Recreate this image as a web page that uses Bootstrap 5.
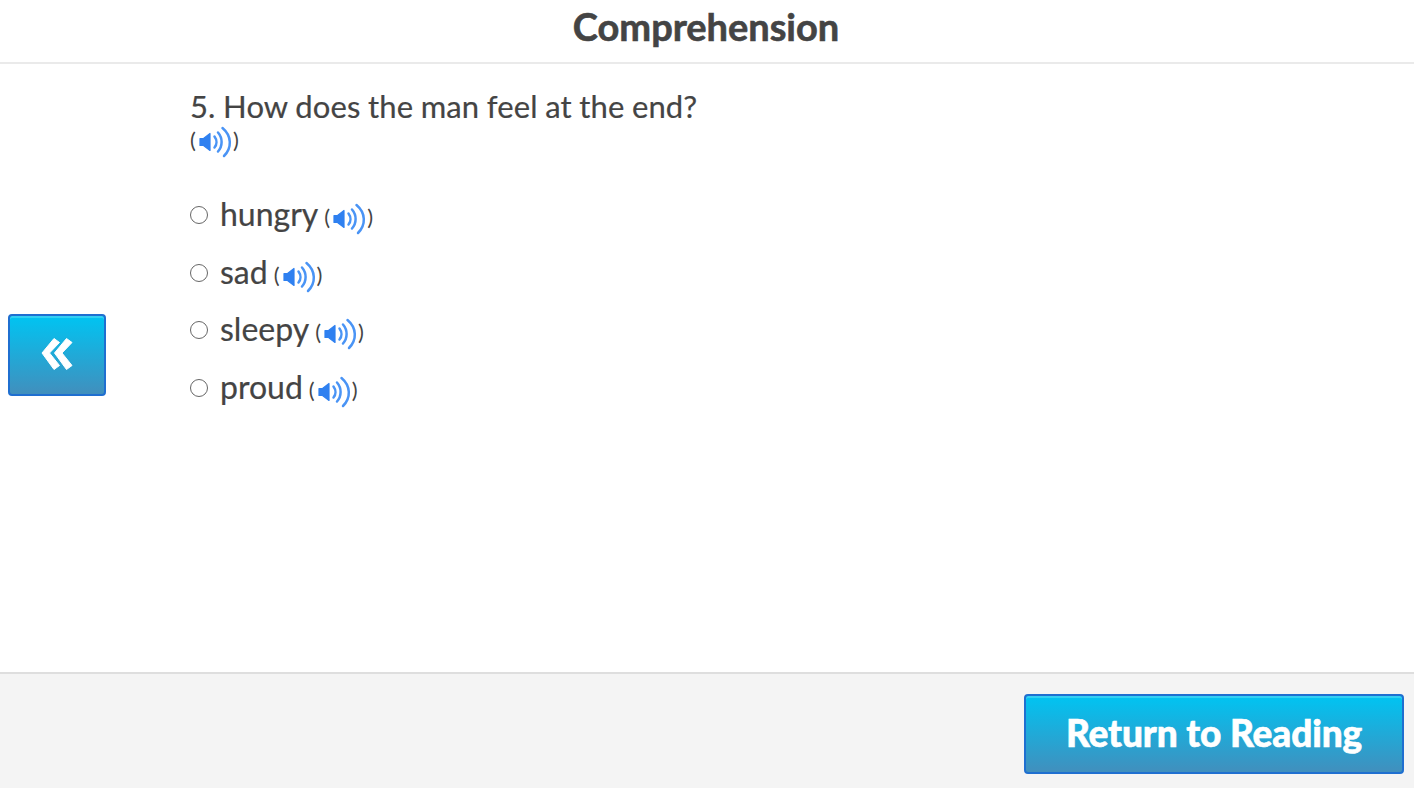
<!DOCTYPE html>
<html lang="en">
<head>
<meta charset="utf-8">
<title>Comprehension</title>
<link rel="stylesheet" href="https://cdn.jsdelivr.net/npm/bootstrap@5.3.0/dist/css/bootstrap.min.css">
<style>
html,body{height:788px;overflow:hidden}
body{font-family:Lato,"Liberation Sans",sans-serif;color:#444;background:#fff}
.hdr{height:64px;border-bottom:2px solid #eaeaea}
.hdr h1{font-size:38px;font-weight:700;line-height:52px;margin:0 2px 0 0;color:#444;letter-spacing:-.03px;-webkit-text-stroke:.6px #444}
.mid{height:608px}
.side{width:190px;flex:none;padding:250px 0 0 8px}
.blue-btn{display:flex;align-items:center;justify-content:center;border:2px solid #1f6fd0;border-radius:4px;padding:0;color:#fff;background:linear-gradient(#00c4f2,#418fbd);box-shadow:inset 0 2px 0 rgba(255,255,255,.2)}
.back-btn{width:98px;height:82px}
.back-btn svg{margin-top:-3px}
.qtext{font-size:31px;line-height:36px;padding-top:24px;word-spacing:-.6px;letter-spacing:.14px;-webkit-text-stroke:.2px #444}
.paren{font-size:22px;line-height:24px;display:flex;align-items:center}
.q-snd{height:34px;margin-top:-1px}
.q-snd .snd{margin-top:4px}
.opts{margin-top:28px}
.opt{height:57.8px;display:flex;align-items:center;font-size:32px;-webkit-text-stroke:.2px #444}
.opt-mark{width:18px;height:18px;border:1.5px solid #666;border-radius:50%;margin-right:12px;margin-top:2px;flex:none}
.opt-word{margin-right:6px}
.opt .paren{margin-top:6px;-webkit-text-stroke:0}
.opt .snd{margin-top:4px}
.ftr{height:116px;border-top:2px solid #dedede;background:#f4f4f4;padding:20px 10px 0 0}
.ret-btn{width:380px;height:80px;padding-bottom:4px;font-size:37px;font-weight:900;line-height:1;letter-spacing:-.1px;-webkit-text-stroke:.6px #fff}
.snd{width:37px;height:34px;flex:none}
</style>
</head>
<body>
<svg width="0" height="0" class="position-absolute">
<symbol id="snd" viewBox="0 0 37 34">
<path d="M4 13.500h3.500L14 8.500v17l-6.500-5H4z" fill="#2f80f0" stroke="#2f80f0" stroke-width="1.200" stroke-linejoin="round"/>
<g fill="none" stroke="#4a94f5" stroke-width="2.500" stroke-linecap="round">
<path d="M18.500 11.500c2.600 3.500 2.600 8 0 11"/>
<path d="M22 7.500c4.800 5.500 4.800 13.500 0 19"/>
<path d="M26.500 3c9.500 8 9.500 20 1.500 28"/>
</g>
</symbol>
</svg>
<header class="hdr text-center"><h1>Comprehension</h1></header>
<main class="mid d-flex">
<div class="side">
<button type="button" class="blue-btn back-btn" aria-label="Back">
<svg width="36" height="36" viewBox="0 0 36 36"><path d="M15 2.500 20.500 6.500 10.500 17 20.500 29.500 15 33.500 3 17ZM27.500 2.500 33 6.500 23 17 33 29.500 27.500 33.500 15.500 17Z" fill="#fff" stroke="#fff" stroke-width="1" stroke-linejoin="round"/></svg>
</button>
</div>
<div>
<div class="qtext">5. How does the man feel at the end?</div>
<div class="paren q-snd">(<svg class="snd"><use href="#snd"/></svg>)</div>
<div class="opts">
<div class="opt"><span class="opt-mark"></span><span class="opt-word">hungry</span><span class="paren">(<svg class="snd"><use href="#snd"/></svg>)</span></div>
<div class="opt"><span class="opt-mark"></span><span class="opt-word">sad</span><span class="paren">(<svg class="snd"><use href="#snd"/></svg>)</span></div>
<div class="opt"><span class="opt-mark"></span><span class="opt-word">sleepy</span><span class="paren">(<svg class="snd"><use href="#snd"/></svg>)</span></div>
<div class="opt"><span class="opt-mark"></span><span class="opt-word">proud</span><span class="paren">(<svg class="snd"><use href="#snd"/></svg>)</span></div>
</div>
</div>
</main>
<footer class="ftr d-flex justify-content-end">
<button type="button" class="blue-btn ret-btn">Return to Reading</button>
</footer>
<script src="https://cdn.jsdelivr.net/npm/bootstrap@5.3.0/dist/js/bootstrap.bundle.min.js"></script>
</body>
</html>
